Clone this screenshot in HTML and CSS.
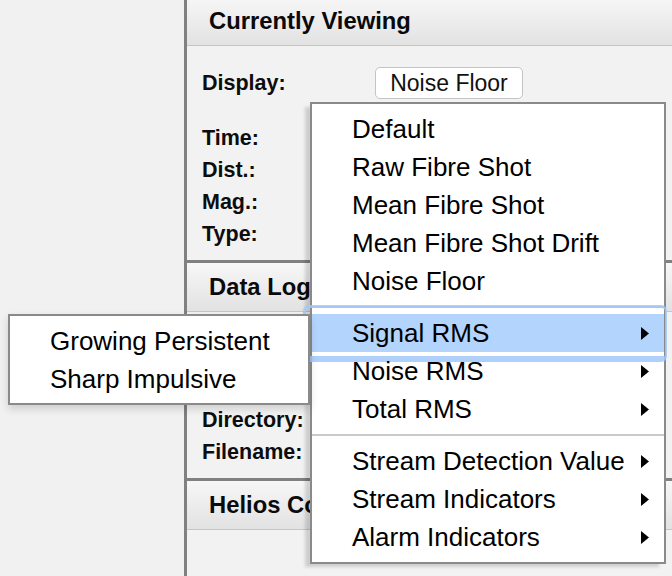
FILE: index.html
```html
<!DOCTYPE html>
<html>
<head>
<meta charset="utf-8">
<link rel="stylesheet" href="styles.css">
</head>
<body>
<div class="screen">
  <div class="gutter"></div>
  <div class="panel">
    <section class="sec first">
      <div class="hdr"><span class="hdr-text">Currently Viewing</span></div>
      <div class="body body1">
        <div class="row display"><span class="lbl">Display:</span><span class="btn">Noise Floor</span></div>
        <div class="rows">
          <div class="row"><span class="lbl">Time:</span></div>
          <div class="row"><span class="lbl">Dist.:</span></div>
          <div class="row"><span class="lbl">Mag.:</span></div>
          <div class="row"><span class="lbl">Type:</span></div>
        </div>
      </div>
    </section>
    <section class="sec">
      <div class="hdr"><span class="hdr-text">Data Logging</span></div>
      <div class="body body2">
        <div class="row"><span class="lbl">Directory:</span></div>
        <div class="row"><span class="lbl">Filename:</span></div>
      </div>
    </section>
    <section class="sec">
      <div class="hdr"><span class="hdr-text">Helios Controls</span></div>
      <div class="body body3"></div>
    </section>
  </div>

  <div class="menu main-menu">
    <div class="item">Default</div>
    <div class="item">Raw Fibre Shot</div>
    <div class="item">Mean Fibre Shot</div>
    <div class="item">Mean Fibre Shot Drift</div>
    <div class="item">Noise Floor</div>
    <div class="sep"></div>
    <div class="item has-sub active"><span>Signal RMS</span><svg class="arrow" width="8" height="13" viewBox="0 0 8 13"><polygon points="0,0 8,6.5 0,13" fill="#000"/></svg></div>
    <div class="item has-sub"><span>Noise RMS</span><svg class="arrow" width="8" height="13" viewBox="0 0 8 13"><polygon points="0,0 8,6.5 0,13" fill="#000"/></svg></div>
    <div class="item has-sub"><span>Total RMS</span><svg class="arrow" width="8" height="13" viewBox="0 0 8 13"><polygon points="0,0 8,6.5 0,13" fill="#000"/></svg></div>
    <div class="sep"></div>
    <div class="item has-sub"><span>Stream Detection Value</span><svg class="arrow" width="8" height="13" viewBox="0 0 8 13"><polygon points="0,0 8,6.5 0,13" fill="#000"/></svg></div>
    <div class="item has-sub"><span>Stream Indicators</span><svg class="arrow" width="8" height="13" viewBox="0 0 8 13"><polygon points="0,0 8,6.5 0,13" fill="#000"/></svg></div>
    <div class="item has-sub"><span>Alarm Indicators</span><svg class="arrow" width="8" height="13" viewBox="0 0 8 13"><polygon points="0,0 8,6.5 0,13" fill="#000"/></svg></div>
  </div>

  <div class="menu sub-menu">
    <div class="item">Growing Persistent</div>
    <div class="item">Sharp Impulsive</div>
  </div>
</div>
</body>
</html>
```

FILE: styles.css
```css
* { box-sizing: border-box; }
html, body { margin: 0; padding: 0; }
body {
  background: #f1f1f1;
  font-family: "Liberation Sans", Arial, Helvetica, sans-serif;
  color: #000;
}
.screen {
  position: relative;
  width: 672px;
  height: 576px;
  overflow: hidden;
  display: flex;
}
.gutter {
  width: 184px;
  flex: none;
  background: #f1f1f1;
}
.panel {
  flex: 1;
  border-left: 3px solid #808080;
  background: #f2f2f2;
  display: flex;
  flex-direction: column;
}
.sec { border-top: 3px solid #808080; }
.sec.first { border-top: none; margin-top: -3px; }
.hdr {
  height: 49px;
  line-height: 48px;
  padding-left: 22px;
  font-weight: bold;
  font-size: 23.8px;
  color: #0a0a0a;
  white-space: nowrap;
  background: linear-gradient(#f7f7f7, #e2e2e2);
  border-bottom: 1px solid #c6c6c6;
}
.hdr-text { display: inline-block; vertical-align: top; }
.body {
  background: #f2f2f2;
  padding-left: 15px;
}
.body1 { padding-top: 21px; padding-bottom: 10px; }
.body2 { padding-top: 92px; padding-bottom: 10px; }
.body3 { height: 60px; }
.row {
  display: flex;
  align-items: center;
  height: 32px;
}
.rows { margin-top: 23px; }
.lbl {
  font-weight: bold;
  font-size: 21.5px;
  color: #0d0d0d;
}
.display .lbl { width: 173px; }
.btn {
  width: 148px;
  height: 32px;
  line-height: 30px;
  text-align: center;
  background: #fff;
  border: 1px solid #c4c4c4;
  border-radius: 5px;
  font-size: 23px;
  color: #111;
}

.menu {
  position: absolute;
  background: #fff;
  border: 2px solid #8a8a8a;
}
.main-menu {
  left: 310px;
  top: 102px;
  width: 356px;
  padding: 6px 0 6px;
  box-shadow: -6px 4px 3px -1px rgba(0, 0, 0, 0.15);
  z-index: 1;
}
.sub-menu {
  left: 8px;
  top: 314px;
  width: 302px;
  padding: 6px 0 5px;
  box-shadow: 0 4px 8px rgba(0, 0, 0, 0.15);
  z-index: 2;
}
.item {
  position: relative;
  height: 38px;
  line-height: 38px;
  padding-left: 40px;
  padding-right: 15px;
  font-size: 26px;
  color: #000;
  white-space: nowrap;
}
.has-sub {
  display: flex;
  justify-content: space-between;
  align-items: center;
}
.arrow { flex: none; display: block; }
.sep {
  height: 2px;
  margin: 6px 0 6px;
  background: #cacaca;
}
.item.active { background: #b3d4fc; }
.item.active::before {
  content: "";
  position: absolute;
  top: -9px;
  bottom: -10px;
  left: -9px;
  right: -3px;
  border-style: solid;
  border-color: rgba(160, 200, 250, 0.85);
  border-width: 3px 2px 6px 3px;
  border-radius: 6px;
  pointer-events: none;
}
```
